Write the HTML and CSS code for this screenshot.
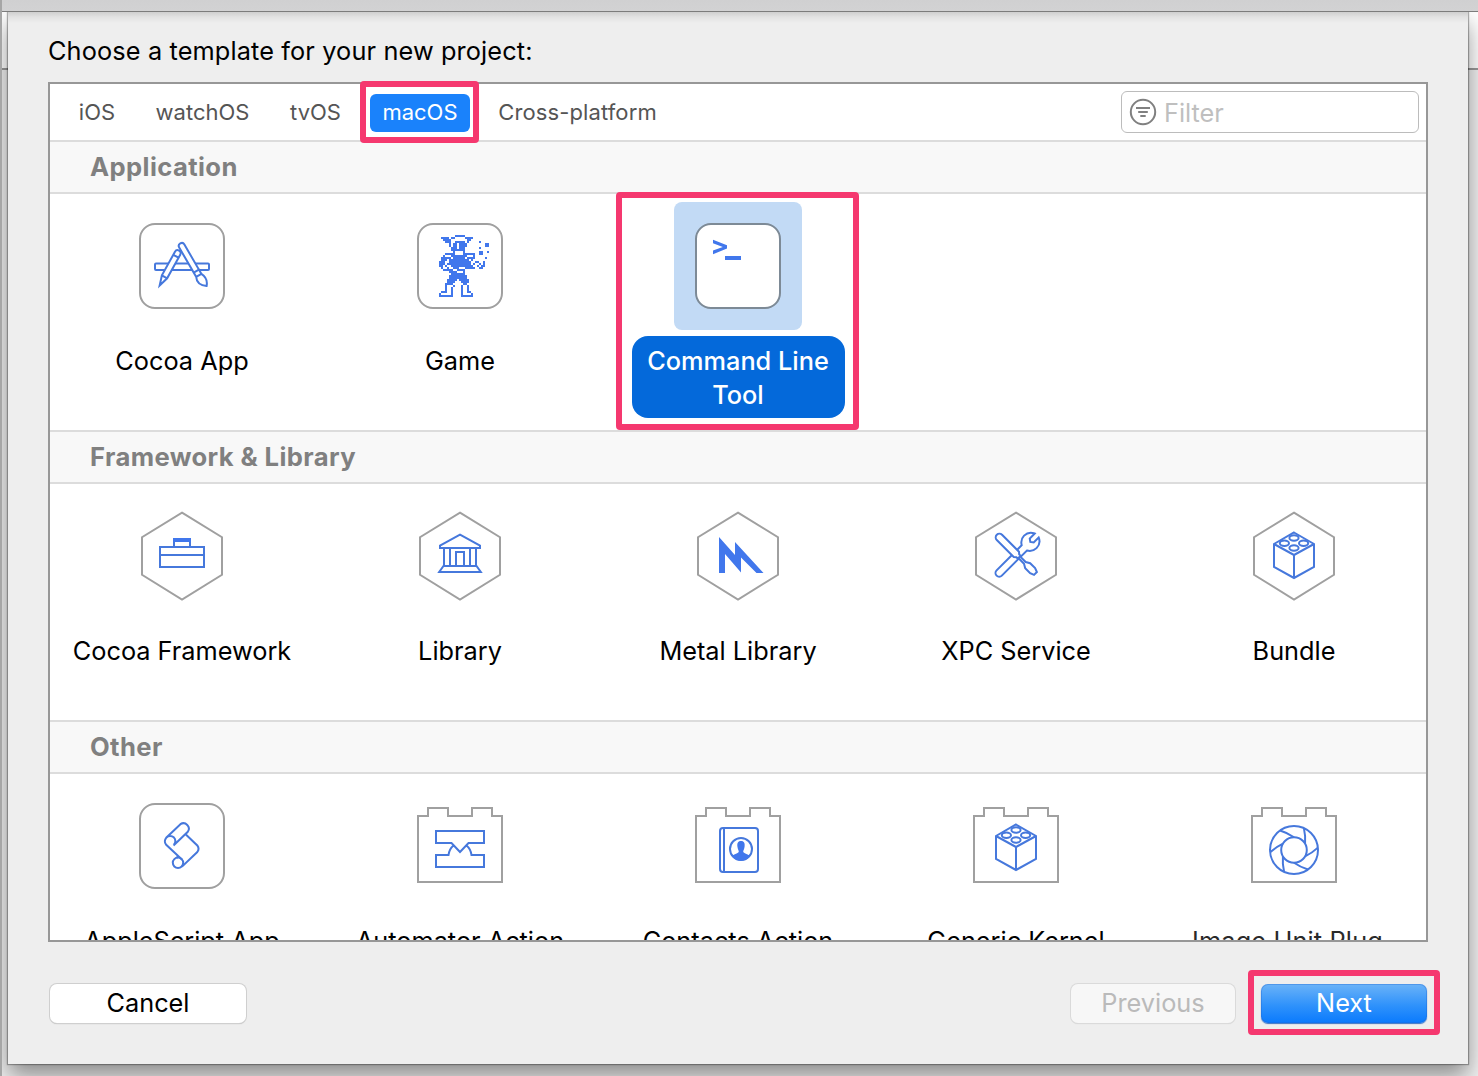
FILE: index.html
```html
<!DOCTYPE html>
<html lang="en">
<head>
<meta charset="utf-8">
<title>New Project</title>
<link rel="stylesheet" href="styles.css">
</head>
<body>
<svg class="defs" aria-hidden="true">
  <symbol id="app" viewBox="0 0 128 128"><rect x="22" y="22" width="84" height="84" rx="15"/></symbol>
  <symbol id="hex" viewBox="0 0 128 128"><path d="M64 20.7L104 45.2V82.8L64 107.5L24 82.8V45.2Z"/></symbol>
  <symbol id="plug" viewBox="0 0 128 128"><path d="M22 34H32V26H52V34H76V26H96V34H106V100H22Z"/></symbol>
  <symbol id="brick" viewBox="0 0 128 128"><path d="M64 40.5L84 52V75L64 86L44 75V52ZM44 52L64 63L84 52M64 63V86"/><ellipse cx="64" cy="46" rx="4.6" ry="2.7"/><ellipse cx="54.4" cy="51.3" rx="4.6" ry="2.7"/><ellipse cx="73.6" cy="51.3" rx="4.6" ry="2.7"/><ellipse cx="64" cy="56" rx="4.6" ry="2.7"/></symbol>
</svg>
<div class="window">
  <div class="titlebar"></div>
  <main class="sheet">
    <h1 class="title">Choose a template for your new project:</h1>
    <section class="panel">
      <nav class="tabs">
        <span class="tab tab-ios">iOS</span>
        <span class="tab tab-watch">watchOS</span>
        <span class="tab tab-tv">tvOS</span>
        <span class="tab tab-mac selected">macOS<i class="mark mark-tab"></i></span>
        <span class="tab tab-cross">Cross-platform</span>
        <label class="filter">
          <svg class="filter-icon" viewBox="0 0 28 28"><circle cx="14" cy="14" r="12.2"/><path d="M7 10.1H21M9.2 14H18.8M11.3 18H16.7"/></svg>
          <span>Filter</span>
        </label>
      </nav>
      <div class="list">
        <h2 class="group">Application</h2>
        <div class="row">
          <div class="item">
            <svg class="icon" viewBox="0 0 128 128"><use class="frame" href="#app"/><rect x="37" y="61.5" width="54" height="6.5" rx="1"/>
              <g transform="translate(63.8 44) rotate(-30)"><path class="solid-white" d="M-3 0a3 3 0 0 1 6 0V29H-3ZM-3 29H3V34H-3ZM-3 34C-5.5 39-4 43 1.5 47C5 43 5 38 3 34Z"/></g>
              <g transform="translate(59.6 51.2) rotate(29)"><path class="solid-white" d="M-3 0a3 3 0 0 1 6 0V27L0 37L-3 27ZM-3 3.5H3M-3 27H3M-1 34H1"/></g>
            </svg>
            <span class="label">Cocoa App</span>
          </div>
          <div class="item">
            <svg class="icon" viewBox="0 0 128 128"><use class="frame" href="#app"/>
              <path class="pixels" transform="translate(43 33) scale(2)" d="M8 .5h5M1 1.5h4M6 1.5h2M13 1.5h4M2 2.5h4M14 2.5h2M3 3.5h3M8 3.5h5M14 3.5h1M5 4.5h1M7 4.5h2M10 4.5h4M5 5.5h1M7 5.5h2M10 5.5h4M6 6.5h3M10 6.5h3M6 7.5h7M7 8.5h1M12 8.5h1M3 9.5h5M12 9.5h6M2 10.5h1M6 10.5h8M17 10.5h1M1 11.5h5M7 11.5h6M14 11.5h4M1 12.5h3M5 12.5h10M16 12.5h1M0 13.5h3M5 13.5h11M18 13.5h2M22 13.5h1M0 14.5h3M4 14.5h12M17 14.5h1M20 14.5h1M22 14.5h1M0 15.5h2M3 15.5h1M6 15.5h11M19 15.5h1M21 15.5h2M1 16.5h1M4 16.5h1M7 16.5h3M13 16.5h5M20 16.5h2M2 17.5h5M9 17.5h4M5 18.5h4M12 18.5h1M6 19.5h7M5 20.5h9M5 21.5h9M4 22.5h5M10 22.5h5M4 23.5h4M11 23.5h4M3 24.5h4M12 24.5h2M3 25.5h1M7 25.5h1M11 25.5h1M14 25.5h1M3 26.5h1M6 26.5h1M11 26.5h1M14 26.5h1M3 27.5h1M6 27.5h1M11 27.5h1M14 27.5h1M1 28.5h3M6 28.5h1M11 28.5h1M14 28.5h2M0 29.5h1M6 29.5h1M11 29.5h1M16 29.5h1M0 30.5h7M11 30.5h6M20 3.5h1M23 4.5h2M23 5.5h2M20 6.5h1M20 8.5h2M20 9.5h2M24 8.5h1M23 11.5h1"/>
            </svg>
            <span class="label">Game</span>
          </div>
          <div class="item chosen">
            <svg class="icon" viewBox="0 0 128 128"><use class="frame" href="#app"/><path class="fill" d="M39 37.7L53 43.3V46.5L39 52.2V48.6L48.8 45L39 41.2ZM51 54H67V58H51Z"/></svg>
            <span class="label">Command Line<br>Tool</span>
            <i class="mark mark-item"></i>
          </div>
        </div>
        <h2 class="group">Framework &amp; Library</h2>
        <div class="row">
          <div class="item">
            <svg class="icon" viewBox="0 0 128 128"><use class="frame" href="#hex"/><path d="M42 55H86V75H42ZM42 63H86M56 55V47H72V55"/><path class="fill" d="M55 46H73V50H55Z"/></svg>
            <span class="label">Cocoa Framework</span>
          </div>
          <div class="item">
            <svg class="icon" viewBox="0 0 128 128"><use class="frame" href="#hex"/><path d="M64 42.7L84 53.7V56H44V53.7ZM48 56V74M54 56V74M74 56V74M80 56V74M60 74V60H68V74M47.5 74H80.5L84.8 80H43.2Z"/></svg>
            <span class="label">Library</span>
          </div>
          <div class="item">
            <svg class="icon" viewBox="0 0 128 128"><use class="frame" href="#hex"/><path class="fill" d="M45 45L61 63V50L89.5 81H82.5L67 65.5V80.5L51 62V81H45Z"/></svg>
            <span class="label">Metal Library</span>
          </div>
          <div class="item">
            <svg class="icon" viewBox="0 0 128 128"><use class="frame" href="#hex"/>
              <g transform="translate(47.2 81) rotate(45)"><path class="solid-white" d="M-3.7 0a3.7 3.7 0 0 0 7.4 0V-35.5C7-37.5 8.8-40.5 8.8-44C8.8-48 6.5-51.5 2.8-53V-46L0-44L-2.8-46V-53C-6.5-51.5-8.8-48-8.8-44C-8.8-40.5-7-37.5-3.7-35.5Z"/></g>
              <g transform="translate(47.4 45.4) rotate(-45)"><path class="solid-white" d="M-3.7 0a3.7 3.7 0 0 1 7.4 0V24L2 26V28H-2V26L-3.7 24ZM-1.2 28V36L-3.5 40V47L-2 51H2L3.5 47V40L1.2 36V28"/></g>
            </svg>
            <span class="label">XPC Service</span>
          </div>
          <div class="item">
            <svg class="icon" viewBox="0 0 128 128"><use class="frame" href="#hex"/><use href="#brick"/></svg>
            <span class="label">Bundle</span>
          </div>
        </div>
        <h2 class="group">Other</h2>
        <div class="row">
          <div class="item">
            <svg class="icon" viewBox="0 0 128 128"><use class="frame" href="#app"/><path d="M55.5 63.5L69.8 49.8A5.4 5.4 0 0 0 62.4 42.2L48.2 55.8A5.6 5.6 0 0 0 48.2 62.8L64.2 77.8M48.5 55.6A5 5 0 1 1 56 62.5M67.6 52.3L79.3 63.4Q81.8 66.8 79.3 70L64 84.6M58.5 76L61 73.5"/><circle cx="60" cy="80.8" r="5.2"/></svg>
            <span class="label">AppleScript App</span>
          </div>
          <div class="item">
            <svg class="icon" viewBox="0 0 128 128"><use class="frame" href="#plug"/><path d="M40 49H88V61H72.5L64 70L55.5 61H40ZM57.5 63.5C54.5 66 53 69 52.5 73H40V85H88V73H75.5C75 69 73.5 66 70.5 63.5"/></svg>
            <span class="label">Automator Action</span>
          </div>
          <div class="item">
            <svg class="icon" viewBox="0 0 128 128"><use class="frame" href="#plug"/><rect x="46" y="46" width="38" height="44" rx="3"/><path d="M50 46V90"/><circle cx="67" cy="67" r="11"/><path class="fill" d="M67 59C70.4 59 71 61.5 70.6 64.5C70.3 67 69.4 68 69.2 69.5C69.4 71.5 74 72 76 74A11 11 0 0 1 58 74C60 72 64.6 71.5 64.8 69.5C64.6 68 63.7 67 63.4 64.5C63 61.5 63.6 59 67 59Z"/></svg>
            <span class="label">Contacts Action</span>
          </div>
          <div class="item">
            <svg class="icon" viewBox="0 0 128 128"><use class="frame" href="#plug"/><use href="#brick" y="2"/></svg>
            <span class="label">Generic Kernel</span>
          </div>
          <div class="item">
            <svg class="icon" viewBox="0 0 128 128"><use class="frame" href="#plug"/>
              <g transform="translate(64 68)"><circle r="24"/><circle r="12.8"/>
                <path id="blade" d="M0-12.8Q-6-17-14-19.5"/><use href="#blade" transform="rotate(60)"/><use href="#blade" transform="rotate(120)"/><use href="#blade" transform="rotate(180)"/><use href="#blade" transform="rotate(240)"/><use href="#blade" transform="rotate(300)"/></g>
            </svg>
            <span class="label dim">Image Unit Plug</span>
          </div>
        </div>
      </div>
    </section>
    <footer class="buttons">
      <span class="button cancel">Cancel</span>
      <span class="button previous">Previous</span>
      <span class="button next">Next<i class="mark mark-next"></i></span>
    </footer>
  </main>
</div>
</body>
</html>
```
FILE: styles.css
```css
* { box-sizing: border-box; }
body {
  margin: 0;
  font-family: Inter, "Liberation Sans", sans-serif;
  font-size: 25.3px;
  font-weight: 430;
  color: #000;
}
.defs { position: absolute; width: 0; height: 0; }
.window {
  width: 1478px;
  height: 1076px;
  overflow: hidden;
  border-left: 2px solid #a6a6a6;
  background: linear-gradient(#fff 0 68px, #999 68px 70px, #f1f1f1 70px);
}
.titlebar {
  position: relative;
  z-index: 1;
  height: 12px;
  margin-left: -2px;
  background: linear-gradient(#d0d0d1, #d2d2d3);
  border-bottom: 1px solid #7c7c7c;
}
.sheet {
  display: flex;
  flex-direction: column;
  width: 1460px;
  height: 1052px;
  margin-left: 6px;
  padding: 22px 40px 0;
  background: linear-gradient(#cfcfcf, #e2e2e2 5px, #eee 11px);
  box-shadow: 0 0 1px 1px rgba(0,0,0,.3), 0 12px 22px rgba(0,0,0,.42);
}
.title {
  height: 48px;
  margin: 0;
  font-size: inherit;
  font-weight: inherit;
  letter-spacing: .13px;
  line-height: 34px;
  white-space: nowrap;
}
.panel {
  display: flex;
  flex-direction: column;
  width: 1380px;
  height: 860px;
  border: 2px solid #979797;
  background: #fff;
}
.tabs {
  display: flex;
  gap: 17px;
  align-items: center;
  flex: 0 0 56px;
  padding: 0 7px 0 17px;
  color: #555;
  font-size: 22px;
}
.tab {
  height: 38px;
  line-height: 38px;
  text-align: center;
  white-space: nowrap;
}
.tab-ios { width: 60px; }
.tab-watch { width: 117px; }
.tab-tv { width: 75px; }
.tab-mac { position: relative; width: 100px; }
.tab-cross { width: 181px; letter-spacing: .12px; }
.selected {
  margin-top: 2px;
  border-radius: 6px;
  background: #1a82fb;
  color: #fff;
  line-height: 36px;
}
.filter {
  display: flex;
  align-items: center;
  gap: 7px;
  width: 298px;
  height: 42px;
  margin-left: auto;
  padding-left: 7px;
  border: 1.5px solid #bcbcbc;
  border-radius: 6px;
  color: #bfbfbf;
  font-size: 25.3px;
}
.filter-icon { width: 28px; height: 28px; fill: none; stroke: #808080; stroke-width: 2; }
.list { flex: 1; min-height: 0; overflow: hidden; }
.group {
  height: 54px;
  margin: 0;
  padding-left: 40px;
  border: solid #dcdcdc;
  border-width: 2px 0;
  background: #f8f8f8;
  color: #808080;
  font-size: 25.6px;
  font-weight: 700;
  letter-spacing: .4px;
  line-height: 49px;
}
.row {
  display: grid;
  grid-template-columns: repeat(5, 278px);
  justify-content: center;
  height: 236px;
}
.item {
  position: relative;
  display: flex;
  flex-direction: column;
  align-items: center;
  gap: 6px;
  padding-top: 8px;
}
.icon {
  flex: none;
  width: 128px;
  height: 128px;
  border-radius: 8px;
  fill: none;
  stroke: #4678dc;
  stroke-width: 2;
}
.frame { stroke: #a0a0a0; }
.solid-white { fill: #fff; }
.fill { fill: #4177ec; stroke: none; }
.pixels { stroke: #4177ec; stroke-width: 1.02; }
.label {
  padding: 8px 15px 6px;
  line-height: 34px;
  text-align: center;
  white-space: nowrap;
}
.dim { padding-right: 28px; letter-spacing: .15px; color: #2a2a2a; }
.chosen .icon { background: #c2daf5; }
.chosen .frame { fill: #fff; stroke: #7d8a96; }
.chosen .label {
  width: 213px;
  border-radius: 16px;
  background: #0469da;
  color: #fff;
  font-weight: 470;
}
.mark { position: absolute; border: 6px solid #f5386f; border-radius: 4px; }
.mark-tab { left: -10px; top: -13px; width: 119px; height: 62px; }
.mark-item { left: 17px; top: -2px; width: 243px; height: 238px; }
.mark-next { left: -13px; top: -14px; width: 192px; height: 65px; }
.buttons { display: flex; padding: 42px 1px 0 2px; }
.button {
  height: 39px;
  border-radius: 7px;
  background: #fff;
  box-shadow: 0 0 0 1px #cfcfcf, 0 1px 1px #b0b0b0;
  line-height: 38px;
  text-align: center;
}
.cancel { width: 196px; }
.previous {
  width: 164px;
  margin-left: auto;
  background: #f7f7f7;
  box-shadow: 0 0 0 1px #dadada, 0 1px 1px #d0d0d0;
  color: #bababa;
}
.next {
  position: relative;
  width: 166px;
  margin-left: 26px;
  background: linear-gradient(#6bb3f8, #2f92fb 55%, #0a7afd);
  box-shadow: inset 0 0 0 1px rgba(30,100,210,.35), 0 1px 1px #3a74c4;
  color: #fff;
}
```
